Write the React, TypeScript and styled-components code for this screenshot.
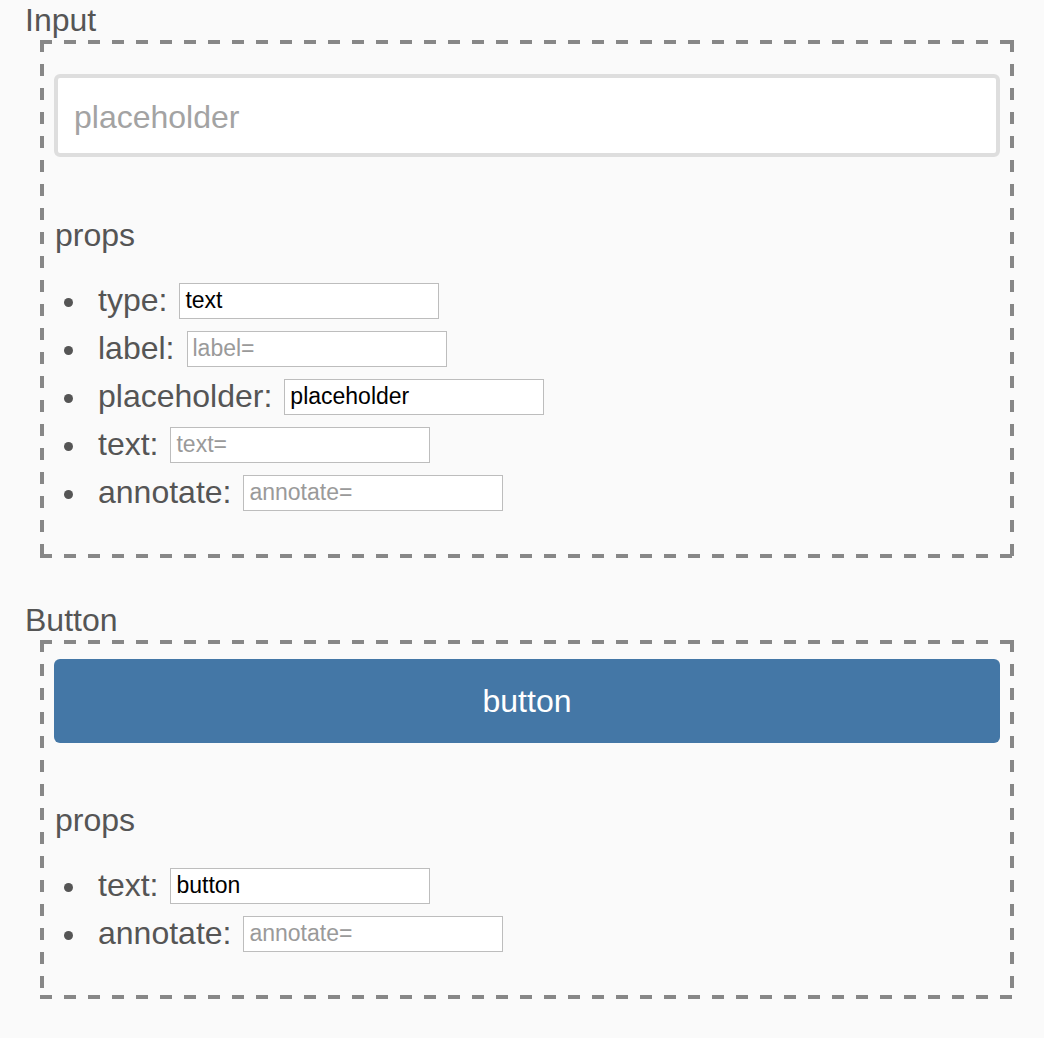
import React from 'react'
import styled, { createGlobalStyle } from 'styled-components'

interface PropField {
  name: string
  value?: string
  hint: string
}

const dash = '#878787'

const GlobalStyle = createGlobalStyle`
  html, body {
    margin: 0;
    padding: 0;
    background: #fafafa;
  }
  body {
    font-family: 'Liberation Sans', Arial, Helvetica, sans-serif;
    color: #555555;
  }
`

const Page = styled.div`
  padding: 0 30px 40px 24px;
`

const Section = styled.section`
  margin-bottom: 42px;
`

const SectionTitle = styled.div`
  font-size: 32px;
  line-height: 40px;
  height: 40px;
  padding-left: 1px;
`

// dashed frame drawn with gradients so the dashes are 12px long like the reference
const Frame = styled.div`
  margin-left: 16px;
  padding: 4px 14px;
  background-image:
    repeating-linear-gradient(to right, ${dash} 0 12px, transparent 12px 24px),
    repeating-linear-gradient(to right, ${dash} 0 12px, transparent 12px 24px),
    repeating-linear-gradient(to bottom, ${dash} 0 12px, transparent 12px 24px),
    repeating-linear-gradient(to bottom, ${dash} 0 12px, transparent 12px 24px);
  background-size: 100% 4px, 100% 4px, 4px 100%, 4px 100%;
  background-position: left top, left bottom, left top, right top;
  background-repeat: no-repeat;
`

const PreviewInput = styled.input`
  display: block;
  box-sizing: border-box;
  width: 100%;
  height: 83px;
  margin: 30px 0 0;
  padding: 3px 16px 0;
  border: 4px solid #dedede;
  border-radius: 6px;
  background: #ffffff;
  font-family: inherit;
  font-size: 32px;
  color: #333333;
  outline: none;

  &::placeholder {
    color: #a3a3a3;
  }
`

const PreviewButton = styled.button`
  display: block;
  width: 100%;
  height: 84px;
  margin: 15px 0 0;
  border: none;
  border-radius: 6px;
  background: #4477a6;
  color: #ffffff;
  font-family: inherit;
  font-size: 32px;
  cursor: pointer;
`

const PropsTitle = styled.div<{ $gap: number }>`
  margin-top: ${p => p.$gap}px;
  font-size: 32px;
  line-height: 37px;
  padding-left: 1px;
`

const PropList = styled.ul`
  margin: 22px 0 38px;
  padding-left: 10px;
  list-style: none;
`

const PropItem = styled.li`
  font-size: 32px;
  line-height: 48px;
  height: 48px;
  white-space: nowrap;
`

const Bullet = styled.span`
  display: inline-block;
  width: 9px;
  height: 9px;
  margin-right: 25px;
  border-radius: 50%;
  background: #555555;
  vertical-align: 4px;
`

const PropInput = styled.input`
  box-sizing: border-box;
  width: 260px;
  height: 36px;
  margin: 0 0 0 12px;
  padding: 0 5px;
  border: 1px solid #bdbdbd;
  border-radius: 0;
  background: #ffffff;
  font-family: inherit;
  font-size: 23px;
  color: #000000;
  vertical-align: 3px;
  outline: none;

  &::placeholder {
    color: #9a9a9a;
  }
`

const inputProps: PropField[] = [
  { name: 'type', value: 'text', hint: 'type=' },
  { name: 'label', hint: 'label=' },
  { name: 'placeholder', value: 'placeholder', hint: 'placeholder=' },
  { name: 'text', hint: 'text=' },
  { name: 'annotate', hint: 'annotate=' }
]

const buttonProps: PropField[] = [
  { name: 'text', value: 'button', hint: 'text=' },
  { name: 'annotate', hint: 'annotate=' }
]

function Props ({ fields, gap }: { fields: PropField[], gap: number }) {
  return (
    <>
      <PropsTitle $gap={gap}>props</PropsTitle>
      <PropList>
        {fields.map(field => (
          <PropItem key={field.name}>
            <Bullet />
            {field.name}:
            <PropInput defaultValue={field.value} placeholder={field.hint} />
          </PropItem>
        ))}
      </PropList>
    </>
  )
}

function App () {
  return (
    <Page>
      <GlobalStyle />
      <Section>
        <SectionTitle>Input</SectionTitle>
        <Frame>
          <PreviewInput placeholder='placeholder' />
          <Props fields={inputProps} gap={60} />
        </Frame>
      </Section>
      <Section>
        <SectionTitle>Button</SectionTitle>
        <Frame>
          <PreviewButton>button</PreviewButton>
          <Props fields={buttonProps} gap={59} />
        </Frame>
      </Section>
    </Page>
  )
}

export default App
